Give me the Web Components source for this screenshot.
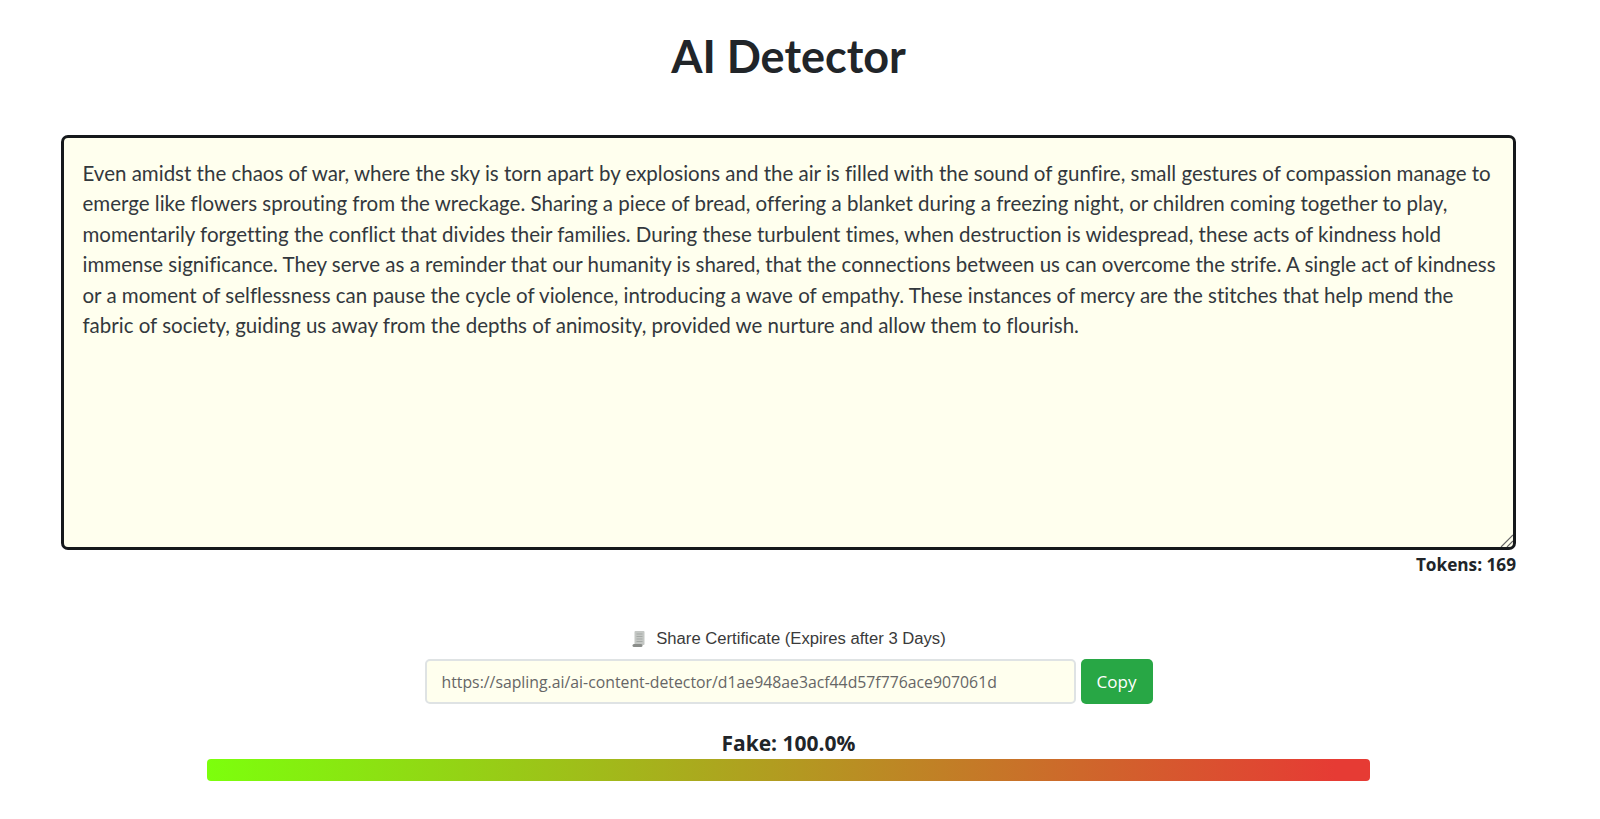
<!DOCTYPE html>
<html lang="en"><head><meta charset="utf-8"><title>AI Detector</title>
<style>
html,body{margin:0;padding:0;background:#fff}
body{font-family:Lato,"Liberation Sans",sans-serif;color:#212529}
</style></head><body>
<detector-app></detector-app>
<template id="app-t"><style>
:host{display:flex;flex-direction:column;align-items:center;width:1577px;height:819px;overflow:hidden;padding-top:27px;box-sizing:border-box}
h1{margin:0;font:700 45px/58px Lato,sans-serif;color:#212529}
</style>
<h1>AI Detector</h1>
<text-panel tokens="169" style="margin-top:50px">
<div>Even amidst the chaos of war, where the sky is torn apart by explosions and the air is filled with the sound of gunfire, small gestures of compassion manage to</div>
<div>emerge like flowers sprouting from the wreckage. Sharing a piece of bread, offering a blanket during a freezing night, or children coming together to play,</div>
<div>momentarily forgetting the conflict that divides their families. During these turbulent times, when destruction is widespread, these acts of kindness hold</div>
<div>immense significance. They serve as a reminder that our humanity is shared, that the connections between us can overcome the strife. A single act of kindness</div>
<div>or a moment of selflessness can pause the cycle of violence, introducing a wave of empathy. These instances of mercy are the stitches that help mend the</div>
<div>fabric of society, guiding us away from the depths of animosity, provided we nurture and allow them to flourish.</div>
</text-panel>
<share-box url="https://sapling.ai/ai-content-detector/d1ae948ae3acf44d57f776ace907061d" style="margin-top:54px"></share-box>
<score-bar label="Fake: 100.0%" style="margin-top:26px"></score-bar>
</template>
<template id="panel-t"><style>
:host{display:block;width:1455px}
.box{position:relative;box-sizing:border-box;height:415px;border:3px solid #15181b;border-radius:7px;background:#ffffee;padding:20px 18.500px;font:20.500px/30.400px Lato,sans-serif;font-variant-ligatures:none;color:#33383d;white-space:nowrap;overflow:hidden}
.grip{position:absolute;right:0;bottom:0;width:14px;height:14px}
.tokens{text-align:right;font:700 17.200px/22px "Open Sans",sans-serif;color:#212529;margin-top:4px;margin-bottom:-1px}
</style>
<div class="box"><slot></slot><svg class="grip" viewBox="0 0 14 14"><path d="M2 14 14 2M8 14 14 8" stroke="#666" stroke-width="1.200" fill="none"/></svg></div>
<div class="tokens"></div></template>
<template id="share-t"><style>
:host{display:flex;flex-direction:column;align-items:center}
.cap{display:flex;align-items:center;gap:9px;font:16.650px/20px "Liberation Sans",sans-serif;color:#3a3a3a}
.row{display:flex;gap:5px;margin-top:10px}
.url{box-sizing:border-box;width:651px;height:45px;border:2px solid #dfe3e4;border-radius:5px;background:#ffffee;padding:0 15px;display:flex;align-items:center;font:15.800px "Open Sans",sans-serif;color:#666;white-space:nowrap;overflow:hidden}
.btn{box-sizing:border-box;width:72px;height:45px;border-radius:5px;background:#28a745;color:#fff;display:flex;align-items:center;justify-content:center;font:17px "Open Sans",sans-serif}
svg{width:16px;height:18px}
</style>
<div class="cap"><svg viewBox="0 0 16 18" aria-hidden="true"><rect x="3.500" y="1" width="10" height="14" rx="1" fill="#c4c7c4"/><path d="M5.500 4h6M5.500 6.500h6M5.500 9h6M5.500 11.500h6" stroke="#a5a9a6"/><rect x="1.500" y="14" width="10" height="3" rx="1.500" fill="#8a8d8a"/></svg><span>Share Certificate (Expires after 3 Days)</span></div>
<div class="row"><div class="url"></div><div class="btn">Copy</div></div></template>
<template id="score-t"><style>
:host{display:flex;flex-direction:column;align-items:center}
.l{font:700 21px/26px "Open Sans",sans-serif;color:#212529}
.bar{width:1163px;height:22px;border-radius:4px;margin-top:3px;background:linear-gradient(90deg,#7cff0c,#e63b34 97%)}
</style><div class="l"></div><div class="bar"></div></template>
<script>
function mk(name,tid,init){customElements.define(name,class extends HTMLElement{constructor(){super();this.attachShadow({mode:'open'}).appendChild(document.getElementById(tid).content.cloneNode(true));}connectedCallback(){init&&init(this)}})}
mk('text-panel','panel-t',e=>{e.shadowRoot.querySelector('.tokens').textContent='Tokens: '+e.getAttribute('tokens')});
mk('share-box','share-t',e=>{e.shadowRoot.querySelector('.url').textContent=e.getAttribute('url')});
mk('score-bar','score-t',e=>{e.shadowRoot.querySelector('.l').textContent=e.getAttribute('label')});
mk('detector-app','app-t');
</script>
</body></html>
